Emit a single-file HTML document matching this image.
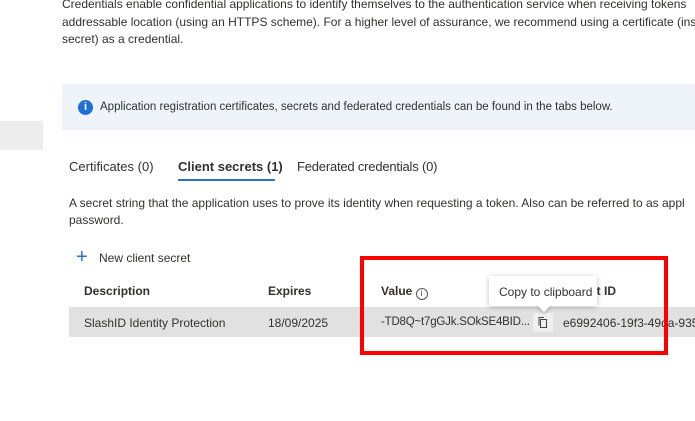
<!DOCTYPE html>
<html><head><style>
body{margin:0;width:695px;height:421px;overflow:hidden;background:#fff;font-family:"Liberation Sans",sans-serif;font-size:12px;color:#323130;position:relative}
.a{position:absolute;white-space:nowrap}
</style></head><body>
<div class="a" style="left:62px;top:-4px;line-height:17.5px">Credentials enable confidential applications to identify themselves to the authentication service when receiving tokens<br>addressable location (using an HTTPS scheme). For a higher level of assurance, we recommend using a certificate (inste<br>secret) as a credential.</div>
<div class="a" style="left:0;top:121px;width:43px;height:29px;background:#ededed"></div>
<div class="a" style="left:62px;top:84px;width:633px;height:46px;background:#eff4fb"></div>
<div class="a" style="left:78px;top:100px;width:15px;height:15px;border-radius:50%;background:#1f6fd6;color:#fff;font-weight:bold;font-size:11px;text-align:center;line-height:15px">i</div>
<div class="a" style="left:100px;top:101px;font-size:11.5px">Application registration certificates, secrets and federated credentials can be found in the tabs below.</div>
<div class="a" style="left:69px;top:159px;font-size:13px">Certificates (0)</div>
<div class="a" style="left:178px;top:159px;font-size:13px;font-weight:bold">Client secrets (1)</div>
<div class="a" style="left:178px;top:179px;width:97px;height:2px;background:#2f6fce"></div>
<div class="a" style="left:297px;top:159px;font-size:13px;letter-spacing:-0.2px">Federated credentials (0)</div>
<div class="a" style="left:69px;top:195px;line-height:17px">A secret string that the application uses to prove its identity when requesting a token. Also can be referred to as appl<br>password.</div>
<div class="a" style="left:76px;top:248px;font-size:20px;color:#2f6fce;line-height:18px;font-weight:300">+</div>
<div class="a" style="left:99px;top:251px">New client secret</div>
<div class="a" style="left:84px;top:284px;font-weight:bold">Description</div>
<div class="a" style="left:268px;top:284px;font-weight:bold">Expires</div>
<div class="a" style="left:381px;top:284px;font-weight:bold">Value <span style="font-weight:normal;display:inline-block;width:10px;height:10px;border:1px solid #555;border-radius:50%;font-size:8px;text-align:center;line-height:10px;vertical-align:-1px">i</span></div>
<div class="a" style="left:590px;top:284px;font-weight:bold">et ID</div>
<div class="a" style="left:69px;top:307px;width:626px;height:30px;background:#e1e1e1"></div>
<div class="a" style="left:84px;top:316px">SlashID Identity Protection</div>
<div class="a" style="left:268px;top:316px">18/09/2025</div>
<div class="a" style="left:381px;top:316px;font-size:11.5px;letter-spacing:-0.2px">-TD8Q~t7gGJk.SOkSE4BID...</div>
<div class="a" style="left:533px;top:313px;width:20px;height:19px;background:#f0f0f0"></div>
<svg class="a" style="left:537px;top:316px" width="12" height="13" viewBox="0 0 12 13"><rect x="3.5" y="3.5" width="6" height="8" fill="none" stroke="#444"/><path d="M2 9.5V1.5h5" fill="none" stroke="#444"/></svg>
<div class="a" style="left:563px;top:316px">e6992406-19f3-49da-935</div>
<div class="a" style="left:489px;top:276px;width:108px;height:30px;background:#fff;box-shadow:0 1px 5px rgba(0,0,0,.25)"></div>
<div class="a" style="left:539px;top:300px;width:10px;height:10px;background:#fff;transform:rotate(45deg);box-shadow:2px 2px 3px rgba(0,0,0,.15)"></div>
<div class="a" style="left:489px;top:276px;width:108px;height:28px;background:#fff"></div>
<div class="a" style="left:499px;top:285px">Copy to clipboard</div>
<div class="a" style="left:360px;top:256px;width:300px;height:91px;border:4px solid #f00"></div>
</body></html>
